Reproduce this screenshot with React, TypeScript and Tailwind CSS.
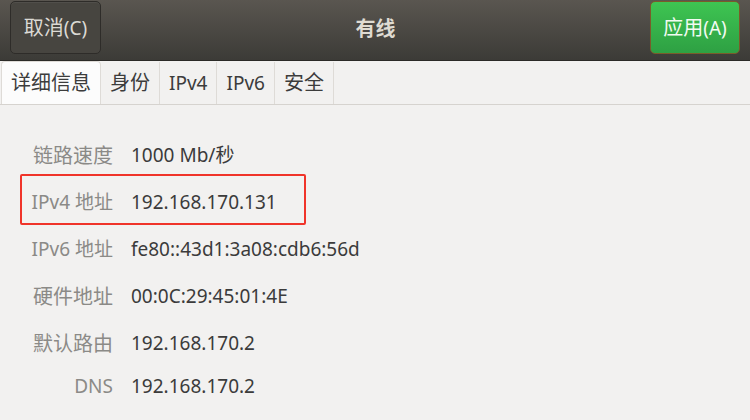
import React from 'react';

const rows = [
  { label: '链路速度', value: '1000 Mb/秒', h: 'h-[47px]', cjk: true },
  { label: 'IPv4 地址', value: '192.168.170.131', h: 'h-[47px]' },
  { label: 'IPv6 地址', value: 'fe80::43d1:3a08:cdb6:56d', h: 'h-[47px]' },
  { label: '硬件地址', value: '00:0C:29:45:01:4E', h: 'h-[47px]', cjk: true },
  { label: '默认路由', value: '192.168.170.2', h: 'h-[47px]', cjk: true },
  { label: 'DNS', value: '192.168.170.2', h: 'h-[38px]' },
];

const tabs = [
  { t: '详细信息', cjk: true },
  { t: '身份', cjk: true },
  { t: 'IPv4' },
  { t: 'IPv6' },
  { t: '安全', cjk: true },
];

export default function App() {
  return (
    <div
      className="w-[750px] h-[420px] overflow-hidden bg-[#f2f1f0] text-[19px]"
      style={{ fontFamily: '"Noto Sans", "Noto Sans CJK SC", sans-serif' }}
    >
      {/* Header bar */}
      <div className="h-[61px] flex items-center justify-between px-[10px] bg-gradient-to-b from-[#5a5650] to-[#3c3b37] border-b border-[#2b2a27]">
        <button className="w-[91px] h-[53px] -mt-[5px] rounded-[5px] border border-[#2e2c29] bg-[#474540] text-[#dcdad5] shadow-[inset_0_1px_0_rgba(255,255,255,0.06)]">
          <span className="text-[20px]">取消</span>(C)
        </button>
        <div className="text-[#dfdbd2] text-[20px] font-bold -mt-[2px]">有线</div>
        <button className="w-[90px] h-[53px] -mt-[5px] rounded-[5px] border border-[#7a5b2a] bg-gradient-to-b from-[#3ec552] to-[#2ea043] text-[#f2fbf2]">
          <span className="text-[20px]">应用</span>(A)
        </button>
      </div>

      {/* Tabs */}
      <div className="h-[44px] flex items-end border-b border-[#d6d3cf] pl-[1px]">
        {tabs.map((tab, i) => (
          <div
            key={tab.t}
            className={
              i === 0
                ? 'h-[43px] px-[9px] flex items-center bg-[#fcfcfc] rounded-t-[4px] border border-b-0 border-[#dedbd7] text-[#3c3c3c]'
                : 'h-[42px] px-[9px] flex items-center border-r border-[#dedbd7] text-[#3c3c3c]'
            }
          >
            <span className={tab.cjk ? 'text-[20px]' : ''}>{tab.t}</span>
          </div>
        ))}
      </div>

      {/* Details */}
      <div className="pt-[27px]">
        {rows.map((r) => (
          <div key={r.label} className={`${r.h} flex items-center`}>
            <div className={`w-[113px] text-right text-[#8b8a87] ${r.cjk ? 'text-[20px]' : ''}`}>{r.label}</div>
            <div className="ml-[18px] text-[#3b3b3b]">{r.value}</div>
          </div>
        ))}
      </div>

      {/* highlight box */}
      <div className="absolute left-[20px] top-[174px] w-[286px] h-[51px] border-2 border-[#f0342a] rounded-[2px] pointer-events-none" />
    </div>
  );
}
